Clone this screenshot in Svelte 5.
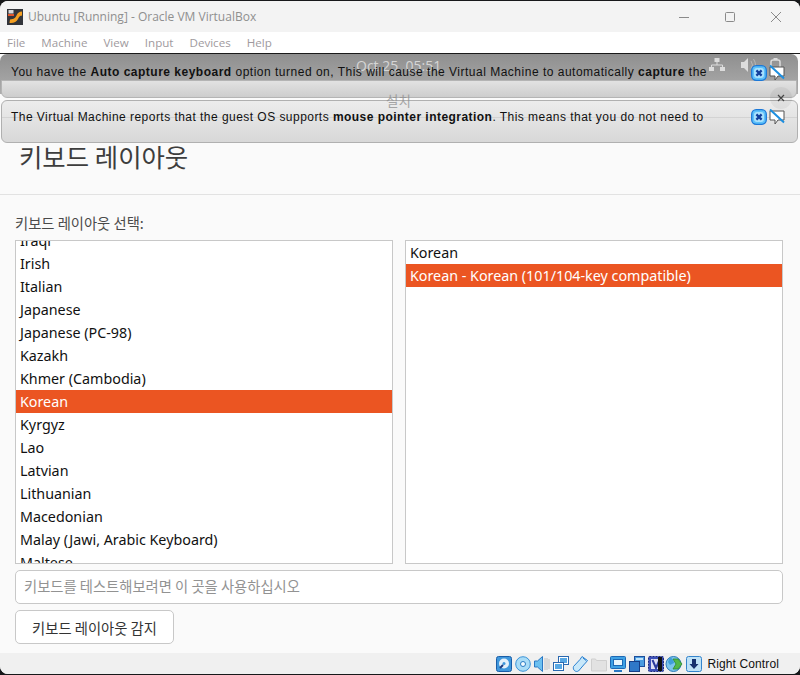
<script>
  const layouts = ['Iraqi', 'Irish', 'Italian', 'Japanese', 'Japanese (PC-98)', 'Kazakh', 'Khmer (Cambodia)', 'Korean', 'Kyrgyz', 'Lao', 'Latvian', 'Lithuanian', 'Macedonian', 'Malay (Jawi, Arabic Keyboard)', 'Maltese'];
  const variants = ['Korean', 'Korean - Korean (101/104-key compatible)'];
  const menus = ['File', 'Machine', 'View', 'Input', 'Devices', 'Help'];
</script>

{#snippet noticeIcons()}
  <div class="notice-icons">
    <svg width="16" height="16" viewBox="0 0 16 16">
      <rect x="0.7" y="0.7" width="14.6" height="14.6" rx="4.5" fill="#5cc0fa" stroke="#1b78d8" stroke-width="1.3" />
      <rect x="3" y="3" width="10" height="10" rx="3" fill="#a9e1fd" />
      <path d="M5.4 5.4l5.2 5.2M10.6 5.4l-5.2 5.2" stroke="#123f9c" stroke-width="2.2" />
    </svg>
    <svg width="16" height="16" viewBox="0 0 16 16">
      <path d="M1 2h14v9h-6l-3 4v-4H1z" fill="#fff" stroke="#555" stroke-width="1" />
      <path d="M1 0.5l14 13" stroke="#1d8fe0" stroke-width="2" />
    </svg>
  </div>
{/snippet}

<div class="window">
  <header class="titlebar">
    <svg class="logo" width="16" height="16" viewBox="0 0 16 16">
      <rect width="16" height="16" fill="#33353a" />
      <rect x="1.5" y="1" width="5" height="3.5" fill="#d8d8d8" />
      <rect x="1" y="5" width="6" height="2" fill="#e2562a" />
      <path d="M15 2.5c-3 .2-4.5 1.5-5.5 4S7 10 3 10.5l-.5 3.5c4 .5 7-1 8.5-4s2-3 4-3.5z" fill="#f5a021" />
    </svg>
    <span class="title">Ubuntu [Running] - Oracle VM VirtualBox</span>
    <div class="win-controls">
      <svg width="12" height="12" viewBox="0 0 12 12"><path d="M1 6.500h10" stroke="#8a8a8a" /></svg>
      <svg width="12" height="12" viewBox="0 0 12 12"><rect x="1.500" y="1.500" width="9" height="9" rx="1" fill="none" stroke="#8a8a8a" /></svg>
      <svg width="12" height="12" viewBox="0 0 12 12"><path d="M1 1l10 10M11 1L1 11" stroke="#8a8a8a" /></svg>
    </div>
  </header>

  <nav class="menubar">
    {#each menus as m}
      <span>{m}</span>
    {/each}
  </nav>

  <main class="vm">
    <section class="installer">
      <h1>키보드 레이아웃</h1>
      <div class="body">
        <p class="label">키보드 레이아웃 선택:</p>
        <div class="lists">
          <ul class="list scrolled">
            {#each layouts as l}
              <li class:selected={l === 'Korean'}>{l}</li>
            {/each}
          </ul>
          <ul class="list">
            {#each variants as v, i}
              <li class:selected={i === 1}>{v}</li>
            {/each}
          </ul>
        </div>
        <input type="text" placeholder="키보드를 테스트해보려면 이 곳을 사용하십시오" />
        <button type="button">키보드 레이아웃 감지</button>
      </div>
    </section>

    <!-- guest desktop top bar and VirtualBox notices float over the installer -->
    <div class="notice first">
      <span class="clock">Oct 25  05:51</span>
      <p>You have the <b>Auto capture keyboard</b> option turned on, This will cause the Virtual Machine to automatically <b>capture</b> the</p>
      <div class="tray">
        <svg width="16" height="14" viewBox="0 0 16 14" fill="#e4e4e4">
          <rect x="5.500" y="0" width="5" height="4" />
          <rect x="0" y="9" width="5" height="4" />
          <rect x="11" y="9" width="5" height="4" />
          <path d="M8 4v3M2.500 9V7h11v2" stroke="#e4e4e4" fill="none" />
        </svg>
        <svg width="16" height="14" viewBox="0 0 16 14">
          <path d="M0 4h3l4-4v14l-4-4H0z" fill="#e4e4e4" />
          <path d="M10 3q3 4 0 8M12.500 1q4 6 0 12" stroke="#bbb" fill="none" />
        </svg>
        <svg width="12" height="18" viewBox="0 0 12 18">
          <rect x="1" y="2" width="9" height="15" rx="2" fill="none" stroke="#e4e4e4" stroke-width="1.500" />
          <rect x="3.500" y="0" width="4" height="2" fill="#e4e4e4" />
          <rect x="3" y="9" width="5" height="6" fill="#e4e4e4" />
        </svg>
      </div>
      {@render noticeIcons()}
    </div>

    <div class="collapsed"></div>

    <div class="notice second">
      <p>The Virtual Machine reports that the guest OS supports <b>mouse pointer integration</b>. This means that you do not need to</p>
      {@render noticeIcons()}
    </div>

    <span class="window-title">설치</span>
    <span class="guest-close">
      <svg width="8" height="8" viewBox="0 0 8 8"><path d="M1 1l6 6M7 1L1 7" stroke="#444" stroke-width="1.200" /></svg>
    </span>
  </main>

  <footer class="statusbar">
    <svg width="16" height="16" viewBox="0 0 16 16">
      <rect x="0.500" y="0.500" width="15" height="15" rx="2" fill="#3f97dc" stroke="#1a5ea8" />
      <circle cx="8" cy="7.500" r="5" fill="#e4f0fa" />
      <circle cx="8" cy="7.500" r="1.500" fill="#3f97dc" />
      <path d="M4 12l3-3" stroke="#1a3a80" stroke-width="2" />
    </svg>
    <svg width="16" height="16" viewBox="0 0 16 16">
      <circle cx="8" cy="8" r="7.300" fill="#a9dcf7" stroke="#3c94d8" />
      <circle cx="8" cy="8" r="2.500" fill="#f4fbff" stroke="#2a7cc4" />
    </svg>
    <svg width="16" height="16" viewBox="0 0 16 16">
      <path d="M0.500 5h3l5-4.500v15l-5-4.500h-3z" fill="#6cc0f0" stroke="#2a78c4" />
      <path d="M11 2.500v11M13 2.500v11M15 3.500v9" stroke="#999" stroke-dasharray="1 1" />
    </svg>
    <svg width="16" height="16" viewBox="0 0 16 16">
      <rect x="5.500" y="0.500" width="10" height="8" fill="#fff" stroke="#2a68b0" />
      <rect x="7" y="2" width="7" height="5" fill="#58a8e4" />
      <rect x="0.500" y="6.500" width="10" height="8" fill="#fff" stroke="#2a68b0" />
      <rect x="2" y="8" width="7" height="5" fill="#58a8e4" />
    </svg>
    <svg width="16" height="16" viewBox="0 0 16 16">
      <path d="M10 0.500l5.500 4-2 2.500-1 1-6 7c-3 1.500-6-1-5-4.500l6.500-7z" fill="#c8e8fa" stroke="#2a80d0" />
      <path d="M11 2l3 2.500" stroke="#2a80d0" />
    </svg>
    <svg width="16" height="16" viewBox="0 0 16 16">
      <path d="M0.500 3h4l1 1.500h10V15H0.500z" fill="#e2e2e2" stroke="#cfcfcf" />
    </svg>
    <svg width="16" height="16" viewBox="0 0 16 16">
      <rect x="0.500" y="0.500" width="15" height="12" rx="1" fill="#3ea0e4" stroke="#1d68b4" />
      <rect x="3.500" y="3.500" width="9" height="6" fill="#e9f6fd" stroke="#1d68b4" />
      <path d="M4 15h8" stroke="#2a78c4" stroke-width="2" />
    </svg>
    <svg width="16" height="16" viewBox="0 0 16 16">
      <rect x="5.500" y="0.500" width="10" height="10" fill="#4a9ce0" stroke="#1d4f9c" />
      <rect x="0.500" y="5.500" width="10" height="10" fill="#2f78c8" stroke="#173f88" />
      <rect x="7" y="2" width="7" height="2" fill="#bfe2fa" />
    </svg>
    <svg class="vbox" width="16" height="18" viewBox="0 0 16 18">
      <rect x="0.500" y="1.500" width="15" height="15" rx="1" fill="#3c50b8" stroke="#1c2a80" stroke-dasharray="2 1" />
      <rect x="3" y="4" width="10" height="10" fill="#dcdff4" />
      <path d="M4.500 5l3.500 8 3.500-8" fill="none" stroke="#2a3a9c" stroke-width="2" />
    </svg>
    <span class="caret"></span>
    <svg width="18" height="16" viewBox="0 0 18 16">
      <circle cx="8.500" cy="8" r="7.500" fill="#7cc4ec" stroke="#2a78b8" />
      <path d="M5 1c3 2 4 4 4 6L5 9 3 6z" fill="#3f9ed8" />
      <path d="M8 3h5l4 5-4 5H8l3-5z" fill="#52b848" stroke="#2f8a30" stroke-width="0.800" />
    </svg>
    <svg width="16" height="16" viewBox="0 0 16 16">
      <rect x="0.500" y="0.500" width="15" height="15" rx="2" fill="#bfe2f7" stroke="#3484cc" />
      <path d="M6 3h4v5h2.500L8 13 3.500 8H6z" fill="#16316e" />
    </svg>
    <span class="host-key">Right Control</span>
  </footer>
</div>

<style>
  :global(body) {
    background: #17181a;
    overflow: hidden;
  }
  .window {
    display: flex;
    flex-direction: column;
    height: 673px;
    margin-top: 1px;
    border-radius: 8px;
    overflow: hidden;
    background: #fafafa;
    font-family: "Noto Sans", sans-serif;
  }
  .titlebar {
    display: flex;
    align-items: center;
    flex: none;
    height: 31px;
    padding-left: 7px;
    background: #f3f3f3;
  }
  .logo {
    margin-right: 5px;
  }
  .title {
    font-family: "Open Sans", sans-serif;
    font-size: 12px;
    color: #8f8f8f;
  }
  .win-controls {
    display: flex;
    gap: 34px;
    margin-left: auto;
    margin-right: 18px;
  }
  .menubar {
    display: flex;
    align-items: center;
    flex: none;
    gap: 16px;
    height: 21px;
    padding-left: 7px;
    background: #fff;
    font-family: "Open Sans", sans-serif;
    font-size: 11.600px;
    color: #a09a9e;
  }
  .vm {
    position: relative;
    flex: 1;
    min-height: 0;
    border-top: 1px solid #1a1a1a;
  }
  .installer {
    display: flex;
    flex-direction: column;
    height: 100%;
    background: #fafafa;
  }
  h1 {
    flex: none;
    height: 141px;
    box-sizing: border-box;
    margin: 0;
    padding: 82px 0 0 19px;
    border-bottom: 1px solid #e2e2e2;
    font-family: "Noto Sans CJK KR", sans-serif;
    font-size: 25.400px;
    font-weight: 400;
    line-height: 40px;
    color: #3d3d3d;
  }
  .body {
    display: flex;
    flex-direction: column;
    align-items: flex-start;
    padding: 0 17px 0 15px;
  }
  .label {
    margin: 18px 0 7px;
    font-family: "Noto Sans CJK KR", sans-serif;
    font-size: 14.300px;
    line-height: 20px;
    color: #4a4a4a;
  }
  .lists {
    display: grid;
    grid-template-columns: 378px 378px;
    gap: 12px;
    height: 324px;
    width: 100%;
  }
  .list {
    box-sizing: border-box;
    height: 324px;
    margin: 0;
    padding: 0;
    overflow: hidden;
    list-style: none;
    background: #fff;
    border: 1px solid #c8c8c8;
  }
  .list li {
    height: 23px;
    padding-left: 4px;
    font-size: 14.300px;
    line-height: 23px;
    color: #111;
  }
  .scrolled li:first-child {
    margin-top: -12px;
  }
  .list li.selected {
    background: #eb5522;
    color: #fff;
  }
  input {
    box-sizing: border-box;
    width: 768px;
    height: 34px;
    margin-top: 6px;
    padding: 0 8px 3px;
    background: #fff;
    border: 1px solid #c8c8c8;
    border-radius: 5px;
    font-family: "Noto Sans CJK KR", sans-serif;
    font-size: 14.300px;
  }
  input::placeholder {
    color: #929292;
    opacity: 1;
  }
  button {
    box-sizing: border-box;
    width: 159px;
    height: 34px;
    margin-top: 6px;
    padding: 0;
    background: #fff;
    border: 1px solid #c8c8c8;
    border-radius: 5px;
    font-family: "Noto Sans CJK KR", sans-serif;
    font-size: 14.300px;
    color: #333;
  }
  .notice {
    position: absolute;
    left: 0;
    display: flex;
    box-sizing: border-box;
    width: 798px;
    padding: 0 0 0 11px;
    font-family: "Liberation Sans", sans-serif;
    font-size: 12px;
    letter-spacing: 0.5px;
    color: #111;
  }
  .notice p {
    position: relative;
    z-index: 1;
    margin: 0;
    white-space: nowrap;
  }
  .notice-icons {
    position: absolute;
    right: 13px;
    display: flex;
    gap: 2px;
    z-index: 1;
  }
  .first {
    top: 0;
    height: 40px;
    padding-top: 11px;
    background: linear-gradient(#8f8f8f, #adadad);
    border-radius: 7px 7px 0 0;
  }
  .first .notice-icons {
    top: 11px;
  }
  .clock {
    position: absolute;
    left: 356px;
    top: 2px;
    font-family: "Open Sans", sans-serif;
    font-size: 14px;
    letter-spacing: 0;
    white-space: pre;
    color: #d5d5d5;
  }
  .tray {
    position: absolute;
    top: 4px;
    right: 16px;
    display: flex;
    gap: 13px;
    opacity: 0.9;
  }
  .tray svg:first-child {
    transform: translateX(-3px);
  }
  .collapsed {
    position: absolute;
    top: 26px;
    left: 1px;
    width: 796px;
    height: 18px;
    box-sizing: border-box;
    background: linear-gradient(#e2e2e2, #cdcdcd);
    border: 1px solid #b4b4b4;
    border-radius: 0 0 6px 6px;
  }
  .window-title {
    position: absolute;
    top: 37px;
    left: 386px;
    font-family: "Noto Sans CJK KR", sans-serif;
    font-size: 13.500px;
    line-height: 18px;
    color: #8e8e8e;
    opacity: 0.75;
  }
  .second {
    top: 46px;
    left: 1px;
    width: 797px;
    height: 43px;
    padding-top: 9px;
    padding-left: 9px;
    background: linear-gradient(#ececec, #d8d8d8);
    border: 1px solid #b0b0b0;
    border-radius: 6px;
    letter-spacing: 0.46px;
  }
  .second::after {
    content: '';
    position: absolute;
    top: 16px;
    left: 0;
    right: 0;
    border-top: 1px solid rgba(0, 0, 0, 0.07);
  }
  .second .notice-icons {
    top: 8px;
    right: 12px;
  }
  .guest-close {
    position: absolute;
    top: 33px;
    left: 770px;
    display: flex;
    align-items: center;
    justify-content: center;
    width: 22px;
    height: 22px;
    border-radius: 50%;
    background: rgba(0, 0, 0, 0.05);
  }
  .statusbar {
    display: flex;
    align-items: center;
    justify-content: flex-end;
    flex: none;
    gap: 3px;
    height: 21px;
    padding-right: 21px;
    background: #f0f0f0;
  }
  .caret {
    height: 14px;
    margin-left: -9px;
    width: 2px;
    border: 1px solid #111;
    border-width: 0 1px;
    background: #111;
  }
  .host-key {
    margin-left: 2px;
    font-family: "Liberation Sans", sans-serif;
    font-size: 12px;
    letter-spacing: 0.12px;
    color: #111;
  }
</style>
